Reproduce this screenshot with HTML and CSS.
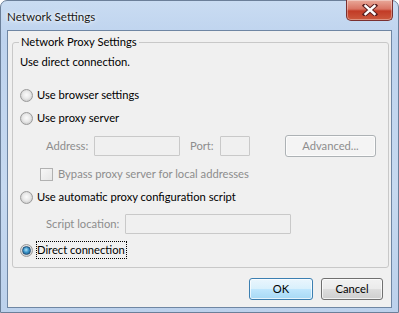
FILE: index.html
```html
<!DOCTYPE html>
<html>
<head>
<meta charset="utf-8">
<link rel="stylesheet" href="styles.css">
</head>
<body>
<div class="window">
  <div class="titlebar">
    <div class="title">Network Settings</div>
    <div class="close">
      <svg width="20" height="12" viewBox="0 0 20 12">
        <path d="M5 1.5 L15 10.5 M15 1.5 L5 10.5" stroke="#5a2020" stroke-width="4.4" fill="none" stroke-linecap="square"/>
        <path d="M5.5 2 L14.5 10 M14.5 2 L5.5 10" stroke="#ffffff" stroke-width="2.4" fill="none" stroke-linecap="square"/>
      </svg>
    </div>
  </div>
  <div class="client">
    <fieldset class="group">
      <legend>Network Proxy Settings</legend>
      <div class="status">Use direct connection.</div>
      <div class="opt r1"><span class="radio"></span><span>Use browser settings</span></div>
      <div class="opt r2"><span class="radio"></span><span>Use proxy server</span></div>
      <div class="row addr">
        <span class="lbl dis l-addr">Address:</span>
        <span class="input w-addr"></span>
        <span class="lbl dis l-port">Port:</span>
        <span class="input w-port"></span>
        <span class="btn adv">Advanced...</span>
      </div>
      <div class="opt bypass"><span class="check"></span><span class="dis">Bypass proxy server for local addresses</span></div>
      <div class="opt r3"><span class="radio"></span><span>Use automatic proxy configuration script</span></div>
      <div class="row script">
        <span class="lbl dis l-script">Script location:</span>
        <span class="input w-script"></span>
      </div>
      <div class="opt r4"><span class="radio on"></span><span class="focus">Direct connection</span></div>
    </fieldset>
    <div class="buttons">
      <span class="btn ok">OK</span>
      <span class="btn cancel">Cancel</span>
    </div>
  </div>
</div>
</body>
</html>
```

FILE: styles.css
```css
* { box-sizing: border-box; }
html, body { margin: 0; padding: 0; }
body {
  width: 399px;
  height: 313px;
  overflow: hidden;
  background: #ffffff;
  font-family: Lato, "Noto Sans", sans-serif;
  font-size: 11.2px;
  color: #000;
  white-space: nowrap;
}
.window {
  width: 399px;
  height: 313px;
  border: 1px solid #6b7f99;
  border-radius: 7px 7px 0 0;
  background: linear-gradient(180deg, #c9dcf2 0%, #bed3ee 12%, #c6d9f0 60%, #bcd1ec 100%);
  padding: 0 6px 4px 6px;
  display: flex;
  flex-direction: column;
}
.titlebar {
  height: 29px;
  display: flex;
  justify-content: space-between;
  align-items: flex-start;
}
.title {
  padding-top: 8px;
  line-height: 16px;
  font-size: 11.6px;
  color: #1a1a1a;
  text-shadow: 0 0 6px #ffffff, 0 0 3px #ffffff;
}
.close {
  width: 47px;
  height: 21px;
  margin-right: -1px;
  margin-top: -1px;
  border: 1px solid #7a3030;
  border-top: none;
  border-radius: 0 0 5px 5px;
  background: linear-gradient(180deg, #e9a99a 0%, #d97463 45%, #c23b26 55%, #cc5a3e 100%);
  display: flex;
  align-items: center;
  justify-content: center;
  box-shadow: inset 0 0 0 1px rgba(255,255,255,0.35);
}
.client {
  flex: 1;
  border: 1px solid #6f86a3;
  background: #f0f0f0;
  padding: 3px 2px 0 4px;
  display: flex;
  flex-direction: column;
}
.group {
  margin: 0;
  padding: 0 7px 9px 7px;
  border: 1px solid #c8c8c8;
  border-radius: 3px;
  min-width: 0;
}
legend {
  padding: 0 2px;
  margin-left: -1px;
  line-height: 16px;
}
.status { margin-top: 4px; line-height: 16px; }
.opt {
  display: flex;
  align-items: center;
  height: 16px;
  line-height: 16px;
}
.r1 { margin-top: 17px; }
.r2 { margin-top: 7px; }
.radio {
  width: 13px;
  height: 13px;
  border-radius: 50%;
  border: 1px solid #9a9a9a;
  background: radial-gradient(circle at 50% 45%, #fbfbfb 0%, #e9e9e9 45%, #cfcfcf 75%, #e4e4e4 100%);
  margin-right: 4px;
  flex: none;
  display: flex;
  align-items: center;
  justify-content: center;
}
.radio.on::after {
  content: "";
  width: 7px;
  height: 7px;
  border-radius: 50%;
  background: radial-gradient(circle at 45% 40%, #aee3fb 0%, #3a94c8 45%, #1a5a88 100%);
  border: 1px solid #244f76;
}
.row {
  display: flex;
  align-items: center;
  height: 20px;
  padding-left: 26px;
}
.addr { margin-top: 10px; }
.lbl { line-height: 16px; flex: none; }
.dis { color: #8d8d8d; }
.input {
  height: 20px;
  border: 1px solid #c9c9c9;
  background: #f0f0f0;
  border-radius: 1px;
  flex: none;
}
.l-addr { width: 48px; }
.w-addr { width: 86px; }
.l-port { width: 30px; margin-left: 10px; }
.w-port { width: 30px; }
.btn {
  display: flex;
  align-items: center;
  justify-content: center;
  border: 1px solid #707070;
  border-radius: 3px;
  background: linear-gradient(180deg, #f2f2f2 0%, #ebebeb 48%, #dddddd 52%, #cfcfcf 100%);
  box-shadow: inset 0 0 0 1px rgba(255,255,255,0.7);
  line-height: 16px;
  flex: none;
}
.adv {
  width: 91px;
  height: 22px;
  margin-left: 35px;
  color: #8d8d8d;
  border-color: #adb2b5;
  background: #f4f4f4;
}
.bypass { margin-top: 10px; padding-left: 20px; }
.check {
  width: 13px;
  height: 13px;
  border: 1px solid #b1b1b1;
  background: linear-gradient(135deg, #f7f7f7, #e6e6e6);
  margin-right: 5px;
  flex: none;
}
.r3 { margin-top: 7px; }
.script { margin-top: 9px; }
.l-script { width: 79px; }
.w-script { width: 166px; }
.r4 { margin-top: 8px; }
.focus {
  outline: 1px dotted #000;
  outline-offset: 0;
  padding: 0 1px 0 0;
  line-height: 16px;
}
.buttons {
  display: flex;
  justify-content: flex-end;
  gap: 8px;
  padding-right: 6px;
  margin-top: 10px;
}
.ok, .cancel { height: 22px; }
.ok { width: 64px; }
.cancel { width: 62px; }
.ok {
  border-color: #3c7fb1;
  background: linear-gradient(180deg, #eaf6fd 0%, #d9f0fc 48%, #bee6fd 52%, #a7d9f5 100%);
}
```
